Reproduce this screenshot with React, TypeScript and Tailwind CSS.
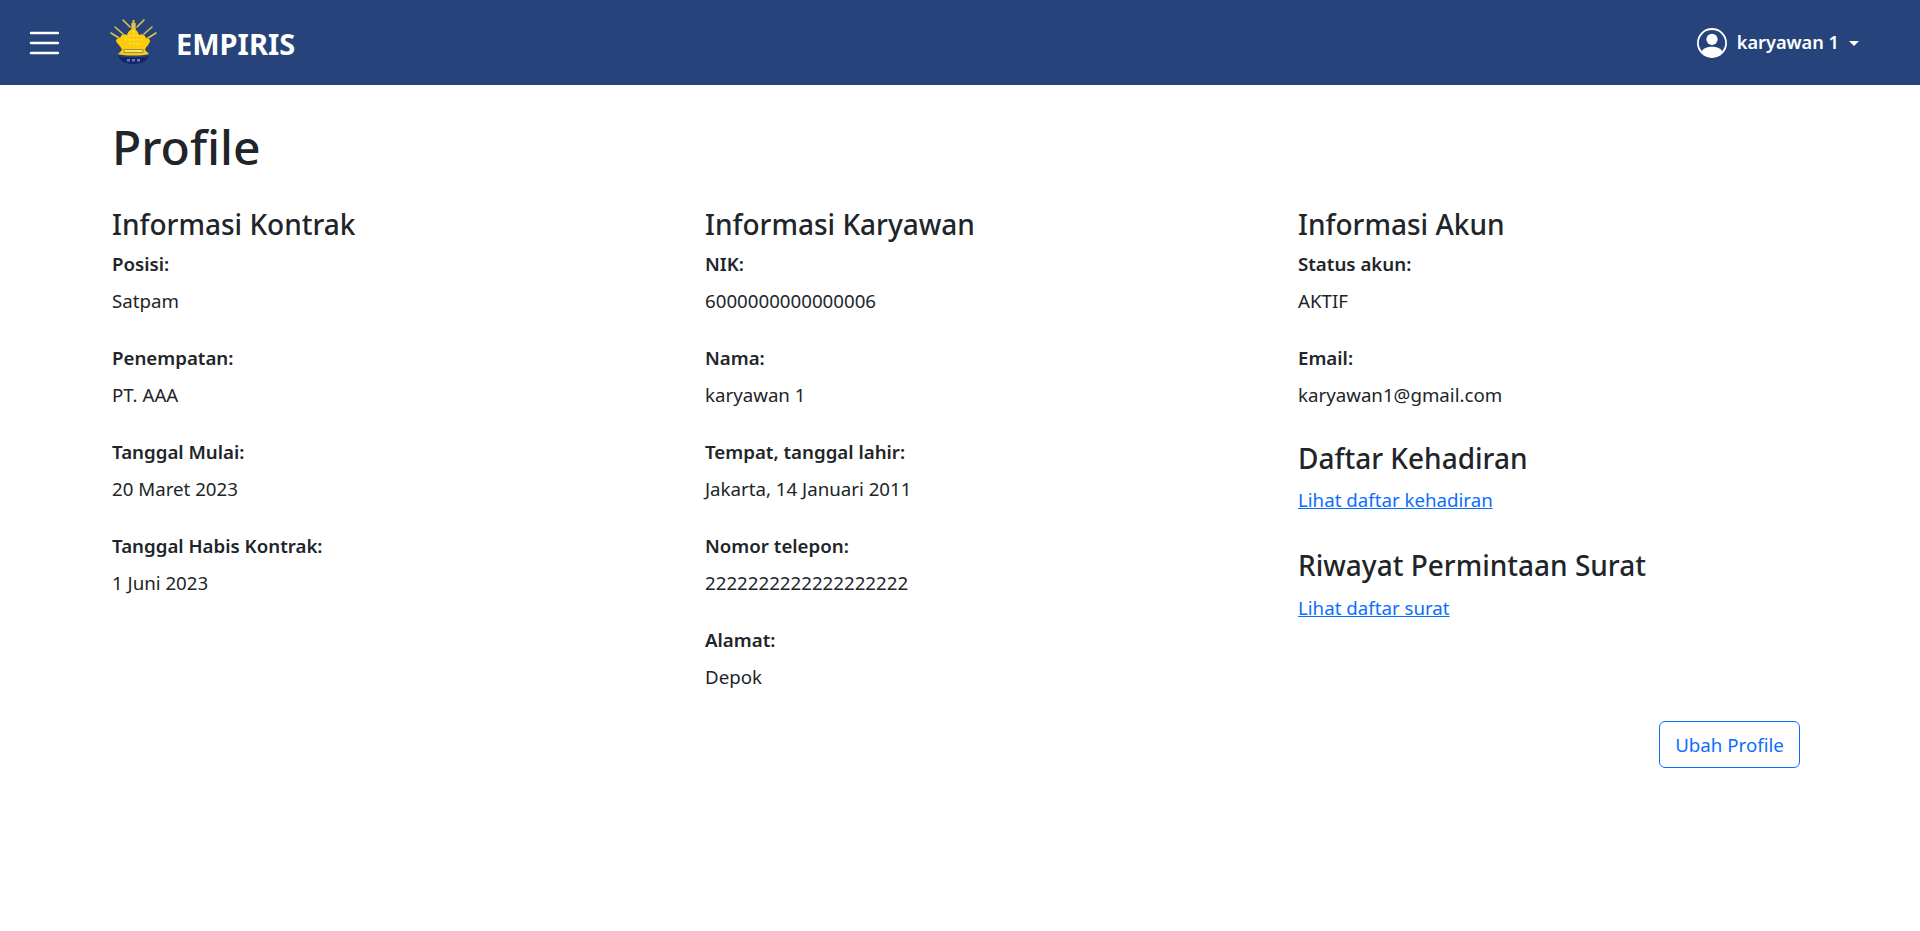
import { FC } from "react";
import { BsPersonCircle } from "react-icons/bs";

const CrownLogo: FC = () => (
  <svg width="48" height="48" viewBox="0 0 48 48" className="shrink-0">
    {/* rays */}
    <g stroke="#dcc24e" strokeWidth="1.600" strokeLinecap="round">
      <path d="M2 15 L10 20" />
      <path d="M6 9 L14 16" />
      <path d="M14 2 L21 9" />
      <path d="M35 2 L28 9" />
      <path d="M43 9 L35 16" />
      <path d="M47 15 L39 20" />
    </g>
    <path d="M23.500 2h2v3h1.200v7h-4.400v-7h1.200z" fill="#dcc24e" />
    {/* crown */}
    <path
      d="M24.500 11 C27 11 29 14 30 17 C33 15 36 17 37 20 C39 20 41 21 41 23 C41 26 37 28 36 32 L40 36 C33 38 16 38 9 36 L13 32 C12 28 8 26 7 23 C7 21 9 20 11 20 C12 17 15 15 18 17 C19 14 21 11 24.500 11z"
      fill="#fccc0a"
    />
    <path d="M15 31.500h19v3H15z" fill="#f4e27a" stroke="#77712c" strokeWidth="0.700" />
    <g fill="#fff1a0">
      <rect x="24" y="13" width="1.200" height="1.200" />
      <rect x="20" y="17" width="1.200" height="1.200" />
      <rect x="24" y="17" width="1.200" height="1.200" />
      <rect x="28" y="17" width="1.200" height="1.200" />
      <rect x="16" y="21" width="1.200" height="1.200" />
      <rect x="20" y="21" width="1.200" height="1.200" />
      <rect x="24" y="21" width="1.200" height="1.200" />
      <rect x="28" y="21" width="1.200" height="1.200" />
      <rect x="32" y="21" width="1.200" height="1.200" />
      <rect x="20" y="25" width="1.200" height="1.200" />
      <rect x="24" y="25" width="1.200" height="1.200" />
      <rect x="28" y="25" width="1.200" height="1.200" />
    </g>
    {/* base */}
    <path d="M9 38 C16 40 33 40 40 38 C38 43 32 46 24.500 46 C17 46 11 43 9 38z" fill="#14226b" />
    <g fill="#6d7ca8">
      <rect x="18" y="41" width="3" height="2.500" />
      <rect x="23" y="41" width="3" height="2.500" />
      <rect x="28" y="41" width="3" height="2.500" />
    </g>
  </svg>
);

const MenuIcon: FC = () => (
  <svg width="30" height="30" viewBox="0 0 30 30" className="shrink-0 mt-[1px]">
    <path d="M2 5h27M2 15h27M2 25h27" stroke="#fff" strokeWidth="2.500" strokeLinecap="round" />
  </svg>
);

const Field: FC<{ label: string; value: string }> = ({ label, value }) => (
  <div className="mb-[28.500px]">
    <p className="font-semibold leading-[28.800px] mb-[8px]">{label}</p>
    <p className="leading-[28.800px]">{value}</p>
  </div>
);

const Heading: FC<{ children: string }> = ({ children }) => (
  <h4 className="text-[28px] font-[550] leading-[34px] mb-[8px]">{children}</h4>
);

export default function App() {
  return (
    <div className="min-h-[931px] bg-white text-[#212529] text-[18.700px] font-['Noto_Sans','Open_Sans',sans-serif]">
      <nav className="h-[85px] bg-[#26447b] flex items-center justify-between pl-[29px] pr-[61px] text-white">
        <div className="flex items-center">
          <MenuIcon />
          <div className="ml-[50px] mb-[2px]">
            <CrownLogo />
          </div>
          <span className="ml-[19px] mt-[2px] text-[29px] font-bold leading-none">EMPIRIS</span>
        </div>
        <div className="flex items-center">
          <BsPersonCircle size={30} />
          <span className="ml-[10px] mt-[1px] text-[18.200px] font-semibold">karyawan 1</span>
          <span className="ml-[10px] mt-[1px] border-x-[5px] border-t-[5px] border-x-transparent border-t-white" />
        </div>
      </nav>

      <main className="px-[112px]">
        <h1 className="text-[48px] font-medium leading-[58px] pt-[33px] mb-[31px]">Profile</h1>

        <div className="grid grid-cols-[593px_593px_1fr]">
          <section>
            <Heading>Informasi Kontrak</Heading>
            <div className="pt-[1px]">
              <Field label="Posisi:" value="Satpam" />
              <Field label="Penempatan:" value="PT. AAA" />
              <Field label="Tanggal Mulai:" value="20 Maret 2023" />
              <Field label="Tanggal Habis Kontrak:" value="1 Juni 2023" />
            </div>
          </section>

          <section>
            <Heading>Informasi Karyawan</Heading>
            <div className="pt-[1px]">
              <Field label="NIK:" value="6000000000000006" />
              <Field label="Nama:" value="karyawan 1" />
              <Field label="Tempat, tanggal lahir:" value="Jakarta, 14 Januari 2011" />
              <Field label="Nomor telepon:" value="2222222222222222222" />
              <Field label="Alamat:" value="Depok" />
            </div>
          </section>

          <section>
            <Heading>Informasi Akun</Heading>
            <div className="pt-[1px]">
              <Field label="Status akun:" value="AKTIF" />
              <Field label="Email:" value="karyawan1@gmail.com" />
            </div>
            <div className="mt-[31px]">
              <Heading>Daftar Kehadiran</Heading>
              <a href="#" className="block mt-[11.500px] leading-[28.800px] text-[#0d6efd] underline mb-[33px]">
                Lihat daftar kehadiran
              </a>
              <Heading>Riwayat Permintaan Surat</Heading>
              <a href="#" className="block mt-[12px] leading-[28.800px] text-[#0d6efd] underline">
                Lihat daftar surat
              </a>
            </div>
          </section>
        </div>

        <div className="flex justify-end">
          <button className="h-[47px] w-[141px] mt-[1px] mr-[8px] rounded-[6px] border border-[#0d6efd] text-[#0d6efd]">
            Ubah Profile
          </button>
        </div>
      </main>
    </div>
  );
}
